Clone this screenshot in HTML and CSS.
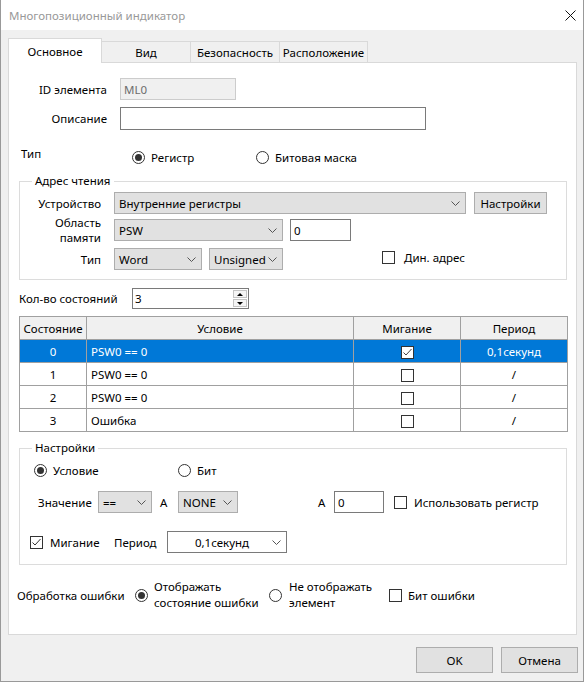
FILE: index.html
```html
<!DOCTYPE html>
<html lang="ru">
<head>
  <meta charset="UTF-8">
  <title>Многопозиционный индикатор</title>
  <link rel="stylesheet" href="styles.css">
</head>
<body>
  <div class="window">
    <div class="titlebar">
      <span class="title">Многопозиционный индикатор</span>
      <svg class="close" width="11" height="11" viewBox="0 0 11 11"><path d="M0.5 0.5L10.5 10.5M10.5 0.5L0.5 10.5" stroke="#111" stroke-width="1" fill="none"/></svg>
    </div>

    <div class="tabs">
      <div class="tab active">Основное</div>
      <div class="tab">Вид</div>
      <div class="tab">Безопасность</div>
      <div class="tab last">Расположение</div>
    </div>

    <div class="panel">
      <div class="row r-id">
        <span class="lbl lbl-top">ID элемента</span>
        <div class="field disabled w-id">ML0</div>
      </div>
      <div class="row r-desc">
        <span class="lbl lbl-top">Описание</span>
        <div class="field w-desc"></div>
      </div>
      <div class="row r-type">
        <span class="lbl-type">Тип</span>
        <span class="opt opt-reg"><span class="radio on"></span>Регистр</span>
        <span class="opt"><span class="radio"></span>Битовая маска</span>
      </div>

      <fieldset class="group g-addr">
        <legend>Адрес чтения</legend>
        <div class="row r-dev">
          <span class="lbl lbl-grp">Устройство</span>
          <div class="combo w-dev"><span>Внутренние регистры</span><svg class="chev" width="9" height="5" viewBox="0 0 9 5"><path d="M0.5 0.5L4.5 4.5L8.5 0.5" stroke="#555" fill="none"/></svg></div>
          <div class="btn w-set">Настройки</div>
        </div>
        <div class="row r-mem">
          <span class="lbl lbl-grp two">Область<br>памяти</span>
          <div class="combo w-psw"><span>PSW</span><svg class="chev" width="9" height="5" viewBox="0 0 9 5"><path d="M0.5 0.5L4.5 4.5L8.5 0.5" stroke="#555" fill="none"/></svg></div>
          <div class="field w-addr">0</div>
        </div>
        <div class="row r-fmt">
          <span class="lbl lbl-grp">Тип</span>
          <div class="combo w-word"><span>Word</span><svg class="chev" width="9" height="5" viewBox="0 0 9 5"><path d="M0.5 0.5L4.5 4.5L8.5 0.5" stroke="#555" fill="none"/></svg></div>
          <div class="combo w-sign"><span>Unsigned</span><svg class="chev" width="9" height="5" viewBox="0 0 9 5"><path d="M0.5 0.5L4.5 4.5L8.5 0.5" stroke="#555" fill="none"/></svg></div>
          <span class="opt opt-dyn"><span class="check"></span>Дин. адрес</span>
        </div>
      </fieldset>

      <div class="row r-count">
        <span class="lbl-count">Кол-во состояний</span>
        <div class="spin">
          <span>3</span>
          <div class="spin-btns">
            <span class="spin-up"></span>
            <span class="spin-down"></span>
          </div>
        </div>
      </div>

      <table class="grid">
        <colgroup>
          <col class="c-state"><col class="c-cond"><col class="c-blink"><col class="c-period">
        </colgroup>
        <thead>
          <tr><th>Состояние</th><th>Условие</th><th>Мигание</th><th>Период</th></tr>
        </thead>
        <tbody>
          <tr class="selected">
            <td class="num">0</td><td class="cond">PSW0 == 0</td>
            <td class="mid"><span class="check on cell-check"><svg width="11" height="11" viewBox="0 0 11 11"><path d="M1.5 5.5L4 8L9.5 2" stroke="#444" fill="none"/></svg></span></td>
            <td class="mid">0,1секунд</td>
          </tr>
          <tr>
            <td class="num">1</td><td class="cond">PSW0 == 0</td>
            <td class="mid"><span class="check cell-check"></span></td><td class="mid">/</td>
          </tr>
          <tr>
            <td class="num">2</td><td class="cond">PSW0 == 0</td>
            <td class="mid"><span class="check cell-check"></span></td><td class="mid">/</td>
          </tr>
          <tr>
            <td class="num">3</td><td class="cond">Ошибка</td>
            <td class="mid"><span class="check cell-check"></span></td><td class="mid">/</td>
          </tr>
        </tbody>
      </table>

      <fieldset class="group g-opts">
        <legend>Настройки</legend>
        <div class="row r-mode">
          <span class="opt opt-cond"><span class="radio on"></span>Условие</span>
          <span class="opt"><span class="radio"></span>Бит</span>
        </div>
        <div class="row r-val">
          <span class="lbl-val">Значение</span>
          <div class="combo w-op"><span>==</span><svg class="chev" width="9" height="5" viewBox="0 0 9 5"><path d="M0.5 0.5L4.5 4.5L8.5 0.5" stroke="#555" fill="none"/></svg></div>
          <span class="lbl-a">A</span>
          <div class="combo w-none"><span>NONE</span><svg class="chev" width="9" height="5" viewBox="0 0 9 5"><path d="M0.5 0.5L4.5 4.5L8.5 0.5" stroke="#555" fill="none"/></svg></div>
          <span class="lbl-a lbl-a2">A</span>
          <div class="field w-const">0</div>
          <span class="opt opt-reguse"><span class="check"></span>Использовать регистр</span>
        </div>
        <div class="row r-blink">
          <span class="opt opt-blink"><span class="check on"><svg width="11" height="11" viewBox="0 0 11 11"><path d="M1.5 5.5L4 8L9.5 2" stroke="#333" fill="none"/></svg></span>Мигание</span>
          <span class="lbl-period">Период</span>
          <div class="combo white w-period"><span class="centered">0,1секунд</span><svg class="chev" width="9" height="5" viewBox="0 0 9 5"><path d="M0.5 0.5L4.5 4.5L8.5 0.5" stroke="#555" fill="none"/></svg></div>
        </div>
      </fieldset>

      <div class="row r-err">
        <span class="lbl-err">Обработка ошибки</span>
        <span class="opt opt-show"><span class="radio on"></span><span class="two-line">Отображать<br>состояние ошибки</span></span>
        <span class="opt opt-hide"><span class="radio"></span><span class="two-line">Не отображать<br>элемент</span></span>
        <span class="opt opt-errbit"><span class="check"></span>Бит ошибки</span>
      </div>
    </div>

    <div class="buttons">
      <div class="btn dlg">OK</div>
      <div class="btn dlg">Отмена</div>
    </div>
  </div>
</body>
</html>
```

FILE: styles.css
```css
* {
  box-sizing: border-box;
}
body {
  margin: 0;
  font-family: "Noto Sans", "DejaVu Sans", sans-serif;
  font-size: 11.5px;
  color: #000;
  background: #fff;
}
.window {
  width: 584px;
  height: 682px;
  background: #f0f0f0;
  border: 1px solid #999;
  border-top: none;
}

/* title bar */
.titlebar {
  height: 30px;
  background: #fff;
  display: flex;
  align-items: center;
  padding: 0 7px 0 8px;
}
.title {
  color: #999;
}
.close {
  margin-left: auto;
}

/* tabs */
.tabs {
  display: flex;
  align-items: flex-end;
  margin: 8px 0 0 7px;
}
.tab {
  width: 90px;
  height: 21px;
  margin-left: -1px;
  border: 1px solid #d9d9d9;
  border-bottom: none;
  display: flex;
  align-items: center;
  justify-content: center;
}
.tab.active {
  width: 94px;
  height: 25px;
  margin-left: 0;
  margin-bottom: -1px;
  background: #fff;
  position: relative;
  z-index: 1;
}
.tab.last {
  width: 89px;
}

/* main panel */
.panel {
  height: 573px;
  margin: 0 6px 0 7px;
  padding: 0 9px 0 10px;
  background: #fff;
  border: 1px solid #d9d9d9;
  display: flex;
  flex-direction: column;
}
.row {
  display: flex;
  align-items: center;
  flex-shrink: 0;
}
.lbl {
  text-align: right;
  margin-right: 13px;
  white-space: nowrap;
}
.lbl-top {
  width: 88px;
}
.lbl-grp {
  width: 81px;
}
.two {
  line-height: 15px;
}

.r-id { margin-top: 15px; height: 22px; }
.r-desc { margin-top: 7px; height: 23px; }
.r-type { margin-top: 18px; height: 18px; }
.lbl-type {
  width: 113px;
  padding: 0 0 8px 2px;
}

/* inputs */
.field {
  height: 100%;
  border: 1px solid #7a7a7a;
  background: #fff;
  padding-left: 3px;
  display: flex;
  align-items: center;
}
.field.disabled {
  background: #f0f0f0;
  border-color: #ccc;
  color: #6d6d6d;
}
.w-id { width: 116px; }
.w-desc { width: 306px; }
.w-addr { width: 61px; margin-left: 7px; }
.w-const { width: 50px; }

.combo {
  height: 100%;
  background: #e1e1e1;
  border: 1px solid #adadad;
  padding-left: 4px;
  display: flex;
  align-items: center;
  white-space: nowrap;
}
.combo.white {
  background: #fff;
  border-color: #7a7a7a;
}
.chev {
  margin-left: auto;
  margin-right: 5px;
  flex-shrink: 0;
}
.centered {
  flex: 1;
  text-align: center;
}
.w-dev { width: 352px; }
.w-psw { width: 169px; }
.w-word { width: 88px; }
.w-sign { width: 74px; margin-left: 7px; }
.w-op { width: 54px; }
.w-none { width: 60px; }
.w-period { width: 120px; }

.btn {
  background: #e1e1e1;
  border: 1px solid #adadad;
  display: flex;
  align-items: center;
  justify-content: center;
  height: 100%;
}
.w-set { width: 73px; margin-left: 8px; }

/* radios and checkboxes */
.opt {
  display: flex;
  align-items: center;
  white-space: nowrap;
}
.radio {
  width: 13px;
  height: 13px;
  border: 1px solid #333;
  border-radius: 50%;
  margin-right: 6px;
  flex-shrink: 0;
  display: flex;
  align-items: center;
  justify-content: center;
  background: #fff;
}
.radio.on::after {
  content: "";
  width: 7px;
  height: 7px;
  border-radius: 50%;
  background: #333;
}
.check {
  width: 13px;
  height: 13px;
  border: 1px solid #333;
  background: #fff;
  margin-right: 7px;
  flex-shrink: 0;
  display: flex;
  align-items: center;
  justify-content: center;
}
.opt-reg { width: 124px; }

/* group boxes */
.group {
  margin: 0;
  padding: 0;
  border: 1px solid #dcdcdc;
  min-width: 0;
  flex-shrink: 0;
}
.group legend {
  margin-left: 12px;
  padding: 0 3px;
  line-height: 16px;
}
.g-addr {
  margin-top: 7px;
  padding-bottom: 9px;
}
.r-dev { margin-top: 3px; height: 22px; }
.r-mem { margin-top: 5px; height: 22px; }
.r-fmt { margin-top: 7px; height: 22px; }
.opt-dyn {
  margin-left: 99px;
  margin-top: -4px;
}
.opt-dyn .check { margin-right: 9px; }

/* state count */
.r-count { margin-top: 8px; height: 21px; }
.lbl-count { width: 113px; }
.spin {
  width: 117px;
  height: 100%;
  border: 1px solid #7a7a7a;
  padding-left: 2px;
  display: flex;
  align-items: center;
}
.spin-btns {
  margin-left: auto;
  margin-right: 1px;
  display: flex;
  flex-direction: column;
  gap: 1px;
}
.spin-up, .spin-down {
  width: 14px;
  height: 8px;
  border: 1px solid #c4c4c4;
  background: #f5f5f5;
  display: flex;
  align-items: center;
  justify-content: center;
}
.spin-up::after {
  content: "";
  border-left: 3px solid transparent;
  border-right: 3px solid transparent;
  border-bottom: 3px solid #000;
}
.spin-down::after {
  content: "";
  border-left: 3px solid transparent;
  border-right: 3px solid transparent;
  border-top: 3px solid #000;
}

/* states table */
.grid {
  margin-top: 7px;
  width: 548px;
  table-layout: fixed;
  border-collapse: collapse;
  flex-shrink: 0;
}
.c-state { width: 67px; }
.c-cond { width: 267px; }
.c-blink { width: 107px; }
.c-period { width: 107px; }
.grid th, .grid td {
  height: 23px;
  padding: 0 4px;
  border: 1px solid #a0a0a0;
  white-space: nowrap;
  font-weight: normal;
}
.grid th {
  background: #f0f0f0;
  text-align: center;
  padding: 0;
}
.grid .num, .grid .mid {
  text-align: center;
}
.grid .selected td {
  background: #0078d7;
  color: #fff;
}
.cell-check {
  display: inline-flex;
  vertical-align: middle;
  margin: 0;
  border-color: #333;
}

/* display settings group */
.g-opts {
  margin-top: 8px;
  padding-bottom: 11px;
}
.r-mode {
  margin-top: 6px;
  height: 16px;
  padding-left: 14px;
}
.opt-cond { width: 144px; }
.r-val { margin-top: 13px; height: 22px; }
.lbl-val {
  width: 60px;
  margin-left: 18px;
}
.lbl-a {
  width: 18px;
  margin-left: 8px;
}
.lbl-a2 {
  width: 16px;
  margin-left: 80px;
}
.opt-reguse { margin-left: 10px; }
.r-blink {
  margin-top: 18px;
  height: 22px;
  padding-left: 10px;
}
.opt-blink { width: 84px; }
.lbl-period { width: 53px; }

/* error handling */
.r-err {
  margin-top: 14px;
  height: 32px;
  margin-left: -2px;
}
.lbl-err { width: 118px; }
.two-line { line-height: 16px; }
.opt-show { width: 134px; }
.opt-hide { width: 120px; }
.opt-hide .radio { margin-right: 7px; }
.opt-errbit .check { margin-right: 6px; }

/* dialog buttons */
.buttons {
  display: flex;
  justify-content: flex-end;
  gap: 8px;
  margin: 12px 5px 0 0;
  height: 26px;
}
.btn.dlg {
  width: 77px;
}
```
